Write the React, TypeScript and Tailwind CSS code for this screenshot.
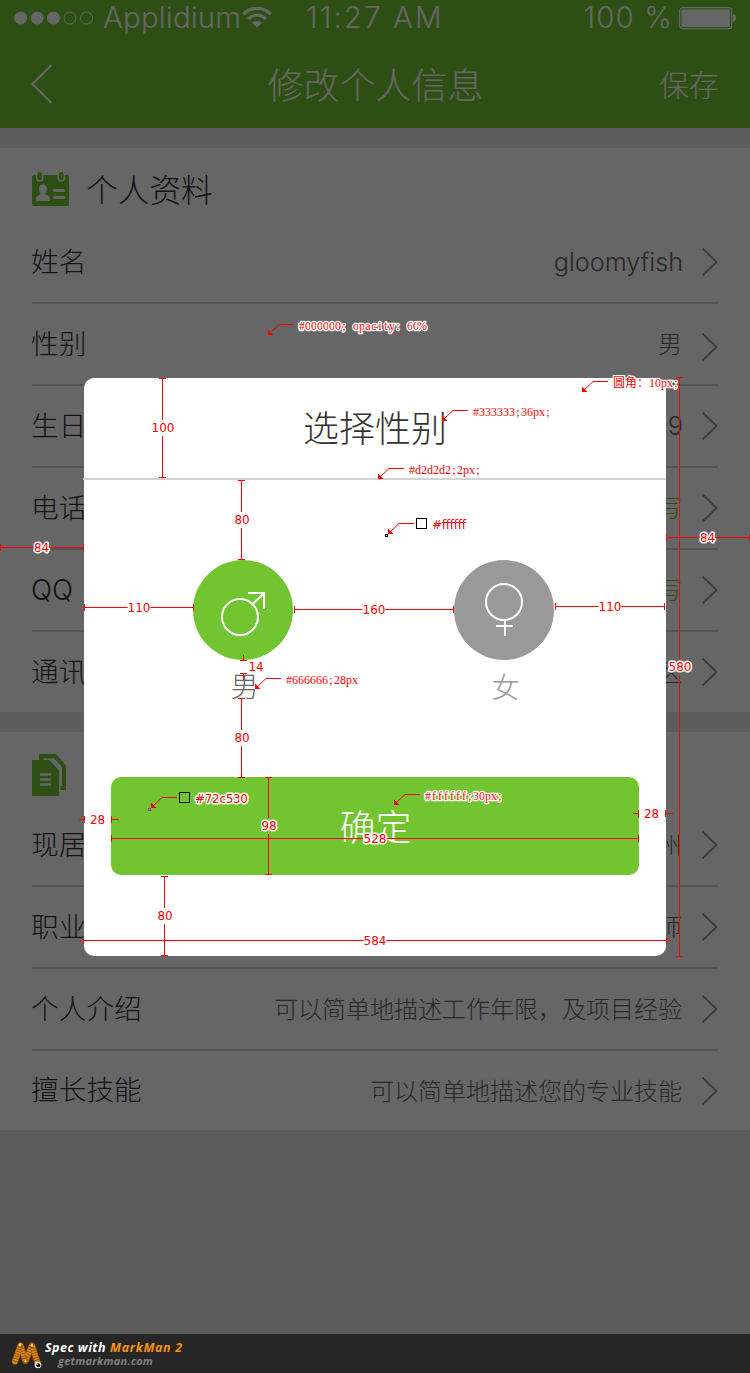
import React from "react";

type RowData = { label: string; value: string; tone?: "green" | "gray"; latin?: boolean; drop?: string };

const profileRows: RowData[] = [
  { label: "姓名", value: "gloomyfish", latin: true },
  { label: "性别", value: "男", drop: "translate-y-[3px]" },
  { label: "生日", value: "9", latin: true },
  { label: "电话", value: "填写", tone: "green" },
  { label: "QQ", value: "填写", tone: "green" },
  { label: "通讯", value: "区" },
];

const workRows: RowData[] = [
  { label: "现居", value: "广州" },
  { label: "职业", value: "工程师" },
  { label: "个人介绍", value: "可以简单地描述工作年限，及项目经验" },
  { label: "擅长技能", value: "可以简单地描述您的专业技能" },
];

function Chevron({ className = "" }: { className?: string }) {
  return (
    <svg className={`h-[30px] w-[17px] shrink-0 ${className}`} viewBox="0 0 17 30" fill="none" stroke="#999999" strokeWidth="2">
      <path d="M1.5 1.5 15.5 15 1.5 28.5" />
    </svg>
  );
}

function Row({ row, last, endHeight }: { row: RowData; last: boolean; endHeight: string }) {
  return (
    <div className={`mx-8 flex items-center ${last ? endHeight : "h-[82px] border-b-2 border-[#d2d2d2]"}`}>
      <span className="-ml-px pt-px font-['Inter','Noto_Sans_CJK_SC',sans-serif] text-[27.700px] leading-none font-light whitespace-nowrap text-[#333333]">
        {row.label}
      </span>
      <span
        className={`ml-auto text-right leading-none font-light whitespace-nowrap ${
          row.latin
            ? "-mr-px pt-px font-['Inter','Noto_Sans_CJK_SC',sans-serif] text-[25.200px]"
            : "pb-[2px] text-[24px]"
        } ${row.tone === "green" ? "text-[#72c530]" : "text-[#666666]"}`}
      >
        {row.value}
      </span>
      <Chevron className={`ml-[19px] ${row.drop ?? ""}`} />
    </div>
  );
}

function StatusBar() {
  return (
    <div className="flex h-[35px] items-center pr-[13px] pl-[14px] font-['Inter','Noto_Sans_CJK_SC',sans-serif] text-[29.500px] leading-none font-light text-white">
      <svg className="h-[14px] w-[80px] shrink-0" viewBox="0 0 80 14">
        <circle cx="6.7" cy="7" r="6.5" fill="#fff" />
        <circle cx="23.2" cy="7" r="6.5" fill="#fff" />
        <circle cx="39.5" cy="7" r="6.5" fill="#fff" />
        <circle cx="56" cy="7" r="6" fill="none" stroke="#fff" />
        <circle cx="72.5" cy="7" r="6" fill="none" stroke="#fff" />
      </svg>
      <span className="ml-[9px] w-[139px] shrink-0 tracking-[0.15px] whitespace-nowrap">Applidium</span>
      <svg className="h-[21px] w-[30px] shrink-0" viewBox="0 0 30 21" fill="none" stroke="#fff">
        <path d="M1.5 7.3C9-.6 21-.6 28.5 7.3" strokeWidth="3.4" />
        <path d="M6.2 12.1c5-5.2 12.600-5.200 17.600 0" strokeWidth="3.2" />
        <path d="M10.200 15.900c2.800-2.600 6.800-2.600 9.600 0L15 20.600z" fill="#fff" stroke="none" />
      </svg>
      <span className="ml-[34px] w-[150px] shrink-0 tracking-[2.100px] whitespace-nowrap">11:27 AM</span>
      <span className="ml-auto shrink-0 tracking-[1.100px] whitespace-nowrap">100 %</span>
      <svg className="ml-[6px] h-6 w-[58px] shrink-0" viewBox="0 0 58 24">
        <rect x="0.7" y="1.700" width="52" height="21" rx="3" fill="none" stroke="#fff" strokeWidth="1.200" />
        <rect x="2.500" y="3.500" width="48.500" height="17.500" rx="1" fill="#fff" />
        <path d="M54 8c4.200 1 4.200 7 0 8z" fill="#fff" />
      </svg>
    </div>
  );
}

function CardIcon() {
  return (
    <svg className="h-[35px] w-[37px]" viewBox="0 0 37 35">
      <rect x="0" y="3" width="37" height="31" rx="2" fill="#72c530" />
      <rect x="4" y="-1" width="7.500" height="10.500" rx="3.500" fill="#fff" />
      <rect x="25.500" y="-1" width="7.500" height="10.500" rx="3.500" fill="#fff" />
      <rect x="5.400" y="0" width="4.600" height="8" rx="2.300" fill="#72c530" />
      <rect x="26.900" y="0" width="4.600" height="8" rx="2.300" fill="#72c530" />
      <path d="M11 12.500c2.700 0 4 2 4 4.300 0 2-.8 3.500-1.800 4.500 0 2 4.800 2.200 4.800 5.700v2H4v-2c0-3.500 4.800-3.700 4.800-5.700C7.800 20.300 7 18.800 7 16.800c0-2.300 1.300-4.300 4-4.300z" fill="#fff" />
      <path d="M22.500 18.500h9M22.500 25.500h9" stroke="#fff" strokeWidth="3" strokeLinecap="round" />
    </svg>
  );
}

function DocIcon() {
  return (
    <svg className="h-[42px] w-[34px]" viewBox="0 0 34 42" fill="#72c530">
      <path d="M8 0h16l10 11.500V35q0 1-1 1h-4.500v-4H30V13L22 4.300H11.500V6H7V1q0-1 1-1z" />
      <path d="M1 6h16.500L27 16.500V41q0 1-1 1H1q-1 0-1-1V7q0-1 1-1z" />
      <path d="M9 20.500h9M9 25.500h9M9 30.500h9" stroke="#fff" strokeWidth="2.600" strokeLinecap="round" />
    </svg>
  );
}

function PageBehind() {
  return (
    <div className="flex h-[1373px] w-[750px] flex-col bg-[#e6e6e6]">
      <header className="h-32 bg-[#72c530] text-white">
        <StatusBar />
        <div className="flex h-[98px] items-center justify-between pr-[31px] pl-[31px] font-light">
          <div className="w-[90px]">
            <svg className="h-10 w-[22px]" viewBox="0 0 22 40" fill="none" stroke="#fff" strokeWidth="2">
              <path d="M20.500 1 1.500 20l19 19" />
            </svg>
          </div>
          <h1 className="pb-[3px] pl-px text-[36px] leading-none">修改个人信息</h1>
          <span className="w-[90px] pb-[2px] text-right text-[30px] leading-none">保存</span>
        </div>
      </header>
      <section className="mt-5 bg-white">
        <div className="flex h-[74px] items-start pt-6 pl-8">
          <CardIcon />
          <h2 className="-mt-[2px] ml-[17px] text-[31.700px] leading-[36px] font-light text-[#333333]">个人资料</h2>
        </div>
        {profileRows.map((row, i) => (
          <Row key={row.label} row={row} last={i === profileRows.length - 1} endHeight="h-20" />
        ))}
      </section>
      <section className="mt-5 bg-white">
        <div className="h-[73px] pt-[22px] pl-8">
          <DocIcon />
        </div>
        {workRows.map((row, i) => (
          <Row key={row.label} row={row} last={i === workRows.length - 1} endHeight="h-[79px]" />
        ))}
      </section>
    </div>
  );
}

function GenderDialog() {
  return (
    <div className="h-[577.500px] w-[582px] rounded-[10px] bg-white">
      <div className="-ml-px flex h-[102px] items-center justify-center border-b-2 border-[#d2d2d2]">
        <h2 className="pb-[4px] pl-px text-[36px] leading-none font-light text-[#333333]">选择性别</h2>
      </div>
      <div className="flex h-[297px] gap-[161px] pt-20 pl-[109px]">
        <div className="flex w-[100px] flex-col items-center">
          <div className="h-[100px] w-[100px] rounded-full bg-[#72c530]">
            <svg viewBox="0 0 100 100" fill="none" stroke="#fff" strokeWidth="2">
              <circle cx="47" cy="57" r="18" />
              <path d="M59.500 44 71 33.500M55 33h16v16" />
            </svg>
          </div>
          <span className="mt-[10px] mr-[-3px] text-[28px] leading-[30px] font-light text-[#666666]">男</span>
        </div>
        <div className="flex w-[100px] flex-col items-center">
          <div className="h-[100px] w-[100px] rounded-full bg-[#999999]">
            <svg viewBox="0 0 100 100" fill="none" stroke="#fff" strokeWidth="2">
              <circle cx="50" cy="42" r="18" />
              <path d="M51 60v16M42 66h17" />
            </svg>
          </div>
          <span className="mt-[11px] mr-[-3px] text-[28px] leading-[30px] font-light text-[#999999]">女</span>
        </div>
      </div>
      <button className="ml-[27px] flex h-[98px] w-[528px] items-center justify-center rounded-[10px] bg-[#72c530] pb-[3px] pl-px text-[36px] leading-none font-light text-white">
        确定
      </button>
    </div>
  );
}

type DimProps = { at: number; from: number; to: number; text: string; label: number; halo?: boolean };

function labelWidth(text: string) {
  return text.length * 7.6;
}

function DimText({ x, y, text, halo }: { x: number; y: number; text: string; halo?: boolean }) {
  return (
    <text
      x={x}
      y={y + 4}
      textAnchor="middle"
      fontSize="12"
      textLength={labelWidth(text)}
      className="fill-[#ff0000] font-['DejaVu_Sans',sans-serif]"
      stroke={halo ? "#fff" : "none"}
      strokeWidth={halo ? 3 : 0}
      strokeLinejoin="round"
      paintOrder="stroke"
    >
      {text}
    </text>
  );
}

function VDim({ at, from, to, text, label, halo }: DimProps) {
  const x = at + 0.5;
  return (
    <g>
      <path
        d={`M${x} ${from}V${label - 8}M${x} ${label + 8}V${to}M${at - 3} ${from + 0.5}h7M${at - 3} ${to - 0.5}h7`}
        stroke="#ff0000"
      />
      <DimText x={at + 1} y={label} text={text} halo={halo} />
    </g>
  );
}

function HDim({ at, from, to, text, label, halo }: DimProps) {
  const y = at + 0.5;
  const half = labelWidth(text) / 2;
  return (
    <g>
      <path
        d={`M${from} ${y}H${label - half}M${label + half} ${y}H${to}M${from + 0.5} ${at - 3}v7M${to - 0.5} ${at - 3}v7`}
        stroke="#ff0000"
      />
      <DimText x={label} y={at + 0.5} text={text} halo={halo} />
    </g>
  );
}

function Pointer({ x, y }: { x: number; y: number }) {
  return (
    <g>
      <path d={`M${x + 1} ${y - 1}L${x + 11} ${y - 10.5}H${x + 26}`} fill="none" stroke="#ff0000" />
      <path d={`M${x} ${y}v-5.500l5.500 5.500z`} fill="#ff0000" />
    </g>
  );
}

type NoteProps = { x: number; y: number; text: string; halo?: boolean };

/* Half-width characters sit centred in 6px cells, full-width ones in 12px cells. */
function cellCentres(text: string, start: number) {
  let x = start;
  return Array.from(text).map((ch) => {
    const w = ch.charCodeAt(0) > 255 ? 12 : 6;
    const centre = x + w / 2;
    x += w;
    return centre;
  });
}

function CellNote({ x, y, text, halo }: NoteProps) {
  return (
    <text
      x={cellCentres(text, x).join(" ")}
      y={y + 4}
      textAnchor="middle"
      fontSize="12"
      className="fill-[#ff0000] font-['Liberation_Serif','Noto_Sans_CJK_SC',serif]"
      stroke={halo ? "#fff" : "none"}
      strokeWidth={halo ? 2.5 : 0}
      strokeLinejoin="round"
      paintOrder="stroke"
    >
      {text}
    </text>
  );
}

function SansNote({ x, y, text, halo, width }: NoteProps & { width: number }) {
  return (
    <text
      x={x}
      y={y + 4}
      fontSize="12"
      textLength={width}
      className="fill-[#ff0000] font-['DejaVu_Sans',sans-serif]"
      stroke={halo ? "#fff" : "none"}
      strokeWidth={halo ? 3 : 0}
      strokeLinejoin="round"
      paintOrder="stroke"
    >
      {text}
    </text>
  );
}

function Annotations() {
  return (
    <svg className="absolute top-0 left-0 h-[1373px] w-[750px]" viewBox="0 0 750 1373">
      <VDim at={162} from={378} to={478} text="100" label={428} />
      <VDim at={241} from={480} to={560} text="80" label={520} />
      <VDim at={241} from={698} to={778} text="80" label={738} />
      <VDim at={268} from={777} to={875} text="98" label={826} halo />
      <VDim at={164} from={876} to={956} text="80" label={916} />
      <VDim at={679} from={377} to={957} text="580" label={667} halo />
      <HDim at={547} from={0} to={84} text="84" label={41.5} halo />
      <HDim at={537} from={666} to={750} text="84" label={707.5} halo />
      <HDim at={607} from={84} to={194} text="110" label={139} />
      <HDim at={609} from={294} to={454} text="160" label={374} />
      <HDim at={606} from={555} to={665} text="110" label={610} />
      <HDim at={838} from={111} to={639} text="528" label={375} halo />
      <HDim at={940} from={83} to={667} text="584" label={375} />

      <path d="M243.500 655v5M240 660.500h7M240 673.500h7M243.500 674v6" stroke="#ff0000" />
      <DimText x={256} y={667} text="14" />
      <path d="M79 819.500h6M84.500 816v7M111.500 816v7M112 819.500h7" stroke="#ff0000" />
      <DimText x={97.500} y={819.500} text="28" />
      <path d="M633 813.500h6M638.500 810v7M665.500 810v7M666 813.500h7" stroke="#ff0000" />
      <DimText x={651.500} y={813.500} text="28" />

      <Pointer x={268} y={335} />
      <CellNote x={299} y={326} text="#000000; opacity: 60%" halo />
      <Pointer x={442} y={421} />
      <CellNote x={473} y={412} text="#333333;36px;" />
      <Pointer x={378} y={479} />
      <CellNote x={409} y={470} text="#d2d2d2;2px;" />
      <Pointer x={582} y={392} />
      <CellNote x={613} y={383} text="圆角：10px;" halo />
      <Pointer x={255} y={689} />
      <CellNote x={286} y={680} text="#666666;28px" />
      <Pointer x={394} y={805} />
      <CellNote x={425} y={796} text="#ffffff;30px;" halo />

      <Pointer x={388} y={534} />
      <rect x="385.500" y="534.500" width="2" height="2" fill="none" stroke="#000" />
      <rect x="416.500" y="518.500" width="10" height="10" fill="none" stroke="#000" />
      <SansNote x={432} y={525} text="#ffffff" width={34} />
      <Pointer x={151} y={808} />
      <rect x="148.500" y="808.500" width="2" height="2" fill="none" stroke="#8d3acf" />
      <rect x="179.500" y="792.500" width="10" height="10" fill="none" stroke="#000" />
      <SansNote x={195} y={799} text="#72c530" width={53} halo />
    </svg>
  );
}

function WormLogo() {
  return (
    <svg className="h-[30px] w-[34px]" viewBox="0 0 34 30" fill="none" strokeLinecap="round" strokeLinejoin="round">
      <path d="M5 21.500 10.500 5.500l5 15.500L22 5.500l6 18.500" stroke="#6b3a08" strokeWidth="7" />
      <path d="M5 21.500 10.500 5.500l5 15.500L22 5.500l6 18.500" stroke="#d9851f" strokeWidth="5.500" />
      <path d="M5 21.500 10.500 5.500l5 15.500L22 5.500l6 18.500" stroke="#8f5210" strokeWidth="6" strokeDasharray="0.800 1.700" strokeLinecap="butt" />
      <path d="M10 4.500v1M22 4.500v1M15.500 21v.5" stroke="#f9cf7b" strokeWidth="2.200" />
      <circle cx="28" cy="25" r="3.300" fill="#f4f4f4" />
      <circle cx="28.300" cy="25.200" r="2" fill="#111" />
      <circle cx="27.600" cy="24.500" r="0.600" fill="#fff" />
    </svg>
  );
}

function SpecFooter() {
  return (
    <footer className="flex h-[39px] w-full items-start bg-[#262626] pt-[6px] pl-[10px] font-['Open_Sans',sans-serif] font-bold italic">
      <WormLogo />
      <div className="flex flex-col whitespace-nowrap">
        <div className="ml-px flex gap-1 text-[12.500px] leading-4">
          <span className="w-[61px] tracking-[0.500px] text-white">Spec with</span>
          <span className="tracking-[0.650px] text-[#f7930f]">MarkMan 2</span>
        </div>
        <span className="-mt-[3px] ml-[14px] text-[11px] leading-4 tracking-[0.220px] text-[#808080]">getmarkman.com</span>
      </div>
    </footer>
  );
}

export default function App() {
  return (
    <div className="relative h-[1373px] w-[750px] overflow-hidden font-['Noto_Sans_CJK_SC',sans-serif]">
      <PageBehind />
      <div className="absolute inset-0 flex flex-col justify-between bg-black/60">
        <div className="pt-[378px] pl-[84px]">
          <GenderDialog />
        </div>
        <SpecFooter />
      </div>
      <Annotations />
    </div>
  );
}
